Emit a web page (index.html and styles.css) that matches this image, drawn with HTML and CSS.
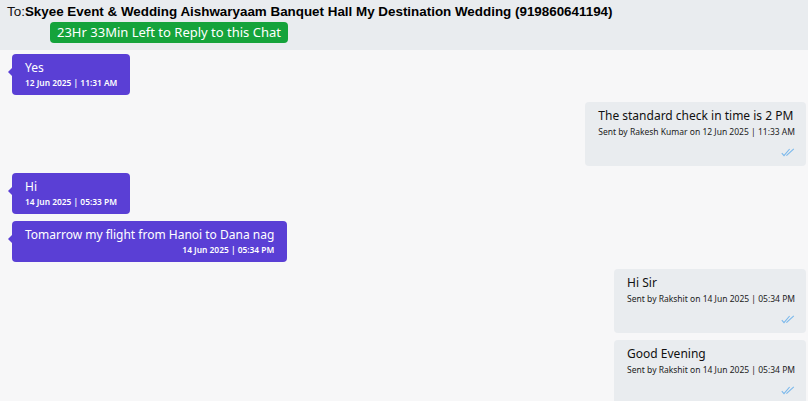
FILE: index.html
```html
<!DOCTYPE html>
<html lang="en">
<head>
  <meta charset="UTF-8" />
  <meta name="viewport" content="width=device-width, initial-scale=1.0"/>
  <title>Chat</title>
  <link rel="stylesheet" href="styles.css">
</head>
<body>

  <div class="chat-header">
    <div class="to-line">To:<b>Skyee Event &amp; Wedding Aishwaryaam Banquet Hall My Destination Wedding (919860641194)</b></div>
    <span class="timer">23Hr 33Min Left to Reply to this Chat</span>
  </div>

  <div class="chat-body">
    <div class="msg in">
      <div class="text">Yes</div>
      <div class="time">12 Jun 2025 | 11:31 AM</div>
    </div>

    <div class="msg out">
      <div class="text">The standard check in time is 2 PM</div>
      <div class="meta">Sent by Rakesh Kumar on 12 Jun 2025 | 11:33 AM</div>
      <div class="ticks">
        <svg width="14" height="9" viewBox="0 0 14 9"><path d="M0.8 5.2 L3 7.6 L8.6 1 M5.4 7.6 L12.8 0.8" fill="none" stroke="#7ab8ec" stroke-width="1.1"/></svg>
      </div>
    </div>

    <div class="msg in">
      <div class="text">Hi</div>
      <div class="time">14 Jun 2025 | 05:33 PM</div>
    </div>

    <div class="msg in">
      <div class="text">Tomarrow my flight from Hanoi to Dana nag</div>
      <div class="time right">14 Jun 2025 | 05:34 PM</div>
    </div>

    <div class="msg out">
      <div class="text">Hi Sir</div>
      <div class="meta">Sent by Rakshit on 14 Jun 2025 | 05:34 PM</div>
      <div class="ticks">
        <svg width="14" height="9" viewBox="0 0 14 9"><path d="M0.8 5.2 L3 7.6 L8.6 1 M5.4 7.6 L12.8 0.8" fill="none" stroke="#7ab8ec" stroke-width="1.1"/></svg>
      </div>
    </div>

    <div class="msg out">
      <div class="text">Good Evening</div>
      <div class="meta">Sent by Rakshit on 14 Jun 2025 | 05:34 PM</div>
      <div class="ticks">
        <svg width="14" height="9" viewBox="0 0 14 9"><path d="M0.8 5.2 L3 7.6 L8.6 1 M5.4 7.6 L12.8 0.8" fill="none" stroke="#7ab8ec" stroke-width="1.1"/></svg>
      </div>
    </div>
  </div>

</body>
</html>
```

FILE: styles.css
```css
:root {
  --header-bg: #e9ecef;
  --body-bg: #f7f7f8;
  --purple: #5a3fd5;
  --green: #15a33b;
  --out-bg: #e9ecef;
}

* {
  box-sizing: border-box;
  margin: 0;
  padding: 0;
}

body {
  font-family: 'Noto Sans', sans-serif;
  background: var(--body-bg);
  color: #111;
  height: 100vh;
  overflow: hidden;
}

.chat-header {
  background: var(--header-bg);
  height: 50px;
  padding: 3px 7px 0;
}

.to-line {
  font-family: 'Liberation Sans', Arial, sans-serif;
  font-size: 13.4px;
  line-height: 17px;
  color: #111;
}

.to-line b {
  font-weight: bold;
  color: #000;
}

.timer {
  display: inline-block;
  margin: 1px 0 0 43px;
  background: var(--green);
  color: #fff;
  font-size: 13px;
  line-height: 21px;
  padding: 0 7px;
  border-radius: 4px;
}

.chat-body {
  display: flex;
  flex-direction: column;
  gap: 7px;
  padding: 4px 2px 0 12px;
}

.msg {
  border-radius: 4px;
  padding: 5px 13px 6px;
  position: relative;
}

.msg .text {
  font-size: 12px;
  line-height: 18px;
}

.msg.in {
  align-self: flex-start;
  background: var(--purple);
  color: #fff;
}

.msg.in::before {
  content: "";
  position: absolute;
  left: -4px;
  top: 14px;
  border-top: 4px solid transparent;
  border-bottom: 4px solid transparent;
  border-right: 4px solid var(--purple);
}

.msg .time {
  font-size: 8.4px;
  font-weight: 600;
  line-height: 12px;
}

.msg .time.right {
  text-align: right;
}

.msg.out {
  align-self: flex-end;
  background: var(--out-bg);
  color: #111;
  padding-bottom: 5px;
  padding-right: 11px;
}

.msg .meta {
  font-size: 8.5px;
  line-height: 13px;
  color: #222;
}

.ticks {
  display: flex;
  justify-content: flex-end;
  padding: 10px 0 0;
  height: 23px;
}
```
